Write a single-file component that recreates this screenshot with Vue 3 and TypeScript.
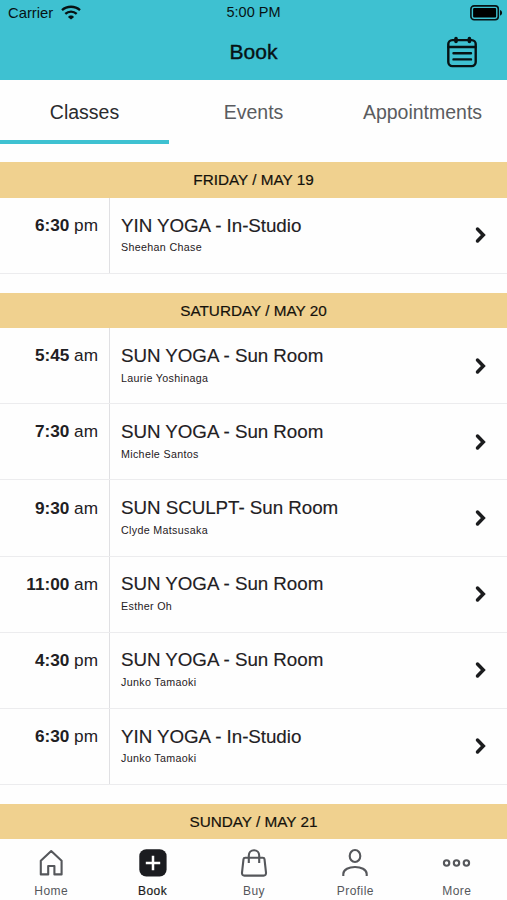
<script setup lang="ts">
interface Session {
  time: string
  period: string
  title: string
  teacher: string
}
interface Day {
  label: string
  sessions: Session[]
}

const tabs: string[] = ['Classes', 'Events', 'Appointments']

const days: Day[] = [
  {
    label: 'FRIDAY / MAY 19',
    sessions: [{ time: '6:30', period: 'pm', title: 'YIN YOGA - In-Studio', teacher: 'Sheehan Chase' }],
  },
  {
    label: 'SATURDAY / MAY 20',
    sessions: [
      { time: '5:45', period: 'am', title: 'SUN YOGA - Sun Room', teacher: 'Laurie Yoshinaga' },
      { time: '7:30', period: 'am', title: 'SUN YOGA - Sun Room', teacher: 'Michele Santos' },
      { time: '9:30', period: 'am', title: 'SUN SCULPT- Sun Room', teacher: 'Clyde Matsusaka' },
      { time: '11:00', period: 'am', title: 'SUN YOGA - Sun Room', teacher: 'Esther Oh' },
      { time: '4:30', period: 'pm', title: 'SUN YOGA - Sun Room', teacher: 'Junko Tamaoki' },
      { time: '6:30', period: 'pm', title: 'YIN YOGA - In-Studio', teacher: 'Junko Tamaoki' },
    ],
  },
  { label: 'SUNDAY / MAY 21', sessions: [] },
]

const navItems: string[] = ['Home', 'Book', 'Buy', 'Profile', 'More']
</script>

<template>
  <div class="screen">
    <header class="top">
      <div class="status">
        <div class="carrier">
          <span>Carrier</span>
          <svg class="wifi" width="20" height="15" viewBox="0 0 20 15">
            <g fill="none" stroke="#071214" stroke-width="2.3">
              <path d="M1 5.2C6 .6 14 .6 19 5.2" />
              <path d="M4.3 8.9C7.6 5.9 12.4 5.9 15.7 8.9" />
            </g>
            <path d="M10 14.6L7.1 12.2C7.1 9.9 12.9 9.9 12.9 12.2Z" fill="#071214" />
          </svg>
        </div>
        <span class="clock">5:00 PM</span>
        <svg class="battery" width="33" height="16" viewBox="0 0 33 16">
          <rect x="0.9" y="0.9" width="27.4" height="13.8" rx="3.2" fill="none" stroke="#071214" stroke-width="1.6" />
          <rect x="3.1" y="3.1" width="23" height="9.4" rx="1" fill="#000" />
          <path d="M30 5C32.8 5.6 32.8 10 30 10.6Z" fill="#071214" />
        </svg>
      </div>
      <div class="titlebar">
        <h1>Book</h1>
        <svg class="calendar" width="32" height="32" viewBox="0 0 32 32" fill="none" stroke="#071214" stroke-width="2.4" stroke-linecap="round">
          <rect x="2.3" y="4.1" width="27.4" height="26" rx="4" />
          <path d="M2.5 11H29.5M7.5 17.2H25M7.5 23.4H25" />
          <path d="M10 2.6V5.4M23.4 2.6V5.4" stroke-width="3.6" />
        </svg>
      </div>
    </header>

    <nav class="tabs">
      <div v-for="(tab, i) in tabs" :key="tab" class="tab" :class="{ active: i === 0 }">{{ tab }}</div>
    </nav>

    <main class="schedule">
      <section v-for="day in days" :key="day.label" class="day">
        <h2>{{ day.label }}</h2>
        <div v-for="session in day.sessions" :key="session.time" class="row">
          <div class="time"><b>{{ session.time }}</b> {{ session.period }}</div>
          <div class="info">
            <div class="title">{{ session.title }}</div>
            <div class="teacher">{{ session.teacher }}</div>
          </div>
          <svg class="chevron" width="12" height="18" viewBox="0 0 12 18">
            <path d="M2.5 3L8.3 9L2.5 15" fill="none" stroke="#1b1c1e" stroke-width="3.5" stroke-linecap="round" />
          </svg>
        </div>
      </section>
    </main>

    <nav class="bottom">
      <div v-for="item in navItems" :key="item" class="item" :class="{ active: item === 'Book' }">
        <svg width="30" height="30" viewBox="0 0 30 30" fill="none" stroke="#55575b" stroke-width="2.1">
          <path v-if="item === 'Home'" d="M4.8 12.8L15.2 3L25.6 12.8V26.4H18.4V18H12.2V26.4H4.8Z" stroke-linejoin="round" />
          <template v-else-if="item === 'Book'">
            <rect x="1.3" y="1.3" width="27.3" height="27.3" rx="7" fill="#1b1c20" stroke="none" />
            <path d="M15 7.8V22.2M7.8 15H22.2" stroke="#fff" stroke-width="2.5" />
          </template>
          <template v-else-if="item === 'Buy'">
            <path d="M6.2 9.7H23.8C25 9.7 25.4 10.2 25.5 11.2L27 24.6C27.2 26.6 26.2 27.6 24.6 27.6H5.4C3.8 27.6 2.8 26.6 3 24.6L4.5 11.2C4.6 10.2 5 9.7 6.2 9.7Z" />
            <path d="M9.8 15V7.6C9.8 4.5 12 2.2 15 2.2S20.2 4.5 20.2 7.6V15" />
          </template>
          <template v-else-if="item === 'Profile'">
            <ellipse cx="15" cy="8" rx="5.3" ry="6" />
            <path d="M3.3 28V26C3.3 16.7 26.7 16.7 26.7 26V28" />
          </template>
          <template v-else>
            <circle cx="4.6" cy="15" r="2.7" />
            <circle cx="14.5" cy="15" r="2.7" />
            <circle cx="24.4" cy="15" r="2.7" />
          </template>
        </svg>
        <span>{{ item }}</span>
      </div>
    </nav>
  </div>
</template>

<style>
body {
  margin: 0;
  background: #fff;
}
</style>

<style scoped>
.screen {
  display: flex;
  flex-direction: column;
  width: 507px;
  height: 900px;
  overflow: hidden;
  background: #fefefe;
  color: #1f2023;
  font-family: "Liberation Sans", Arial, sans-serif;
}
.top {
  flex: none;
  height: 80px;
  background: #3ec1d1;
  color: #071214;
}
.status {
  display: grid;
  grid-template-columns: 1fr auto 1fr;
  align-items: center;
  height: 25px;
  padding: 0 4px 0 8px;
  font-size: 14.8px;
}
.carrier {
  display: flex;
  align-items: center;
  gap: 8px;
}
.clock {
  margin-right: 4px;
  font-size: 14.5px;
  line-height: 25px;
  height: 25px;
}
.battery {
  justify-self: end;
}
.titlebar {
  display: grid;
  grid-template-columns: 1fr auto 1fr;
  align-items: center;
  height: 54px;
}
h1 {
  grid-column: 2;
  margin: 0;
  font-size: 21px;
  font-weight: 400;
  -webkit-text-stroke: 0.4px #071214;
}
.calendar {
  justify-self: end;
  margin-right: 29px;
}
.tabs {
  flex: none;
  display: grid;
  grid-template-columns: repeat(3, 1fr);
  height: 64px;
  margin-bottom: 18.2px;
}
.tab {
  box-sizing: border-box;
  height: 64px;
  padding-top: 4px;
  border-bottom: 4px solid transparent;
  text-align: center;
  font-size: 19.5px;
  line-height: 56px;
  color: #5a5c60;
}
.tab.active {
  border-color: #3ec1d1;
  color: #2a2b2e;
}
.schedule {
  flex: 1;
  min-height: 0;
  overflow: hidden;
}
.day {
  margin-bottom: 18.6px;
}
h2 {
  margin: 0;
  height: 35.6px;
  line-height: 35.4px;
  background: #f0d18f;
  color: #15120c;
  text-align: center;
  font-size: 15.3px;
  font-weight: 400;
  -webkit-text-stroke: 0.2px #15120c;
}
.row {
  display: flex;
  box-sizing: border-box;
  height: 76.15px;
  border-bottom: 1px solid #ececee;
}
.time {
  box-sizing: border-box;
  width: 110px;
  padding: 17.2px 11px 0 0;
  border-right: 1px solid #e0e0e3;
  text-align: right;
  font-size: 17.2px;
  line-height: 20px;
}
.info {
  flex: 1;
  padding: 16.8px 0 0 11px;
}
.title {
  font-size: 18.8px;
  line-height: 22px;
  letter-spacing: -0.05px;
  -webkit-text-stroke: 0.15px currentColor;
}
.teacher {
  margin-top: 3.6px;
  font-size: 10.7px;
  line-height: 14px;
  letter-spacing: 0.33px;
}
.chevron {
  align-self: center;
  margin-right: 20px;
}
.bottom {
  flex: none;
  display: grid;
  grid-template-columns: repeat(5, 1fr);
  height: 60.6px;
}
.item {
  display: flex;
  flex-direction: column;
  align-items: center;
  padding: 9px 0 0 1px;
  font-size: 12px;
  letter-spacing: 0.45px;
  line-height: 14px;
  gap: 6px;
  color: #55575b;
}
.item.active {
  color: #1b1c20;
  -webkit-text-stroke: 0.2px #1b1c20;
}
</style>
